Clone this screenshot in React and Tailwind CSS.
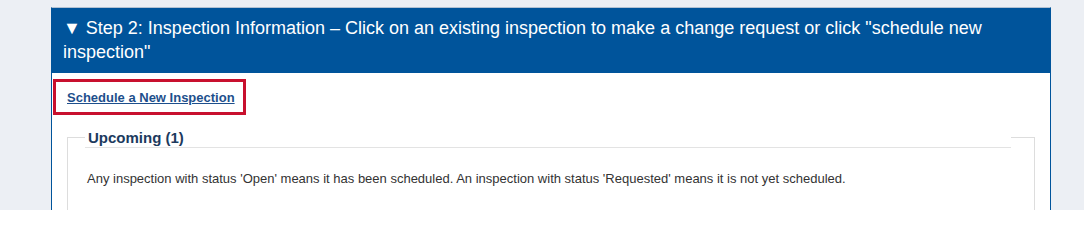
const App = () => {
  return (
    <div className="h-[210px] overflow-hidden bg-[#eceff4] pt-[7px] font-['Liberation_Sans',Arial,sans-serif]">
      <section className="ml-[51px] w-[1000px] border-t border-t-[#b3c2d3] border-x border-x-[#00549b] bg-white">
        <h2 className="bg-[#00549b] pl-[11px] pr-4 pt-[8px] pb-[9px] text-[18px] leading-[24px] font-normal text-white">
          ▼ Step 2: Inspection Information – Click on an existing inspection to make a change request or click
          "schedule new inspection"
        </h2>
        <div className="pt-[6px] pl-px">
          <div className="inline-block w-[193px] h-[36px] border-[3px] border-[#c8102e] pl-[11px] pt-[3px]">
            <a
              href="#"
              className="text-[13px] leading-[16px] font-bold text-[#1d4f8c] underline"
            >
              Schedule a New Inspection
            </a>
          </div>
        </div>
        <fieldset className="mx-[15px] mt-[12px] border border-[#dddddd] pl-[17px] pr-[23px] pb-10">
          <legend className="w-full border-b border-[#e3e3e3] pt-[2px] pl-[3px] text-[15px] leading-[18px] font-bold text-[#1c3a5e]">
            Upcoming (1)
          </legend>
          <p className="mt-[22px] pl-[2px] text-[13px] leading-[18px] text-[#333333]">
            Any inspection with status 'Open' means it has been scheduled. An inspection with status 'Requested'
            means it is not yet scheduled.
          </p>
        </fieldset>
      </section>
    </div>
  );
};

export default App;
